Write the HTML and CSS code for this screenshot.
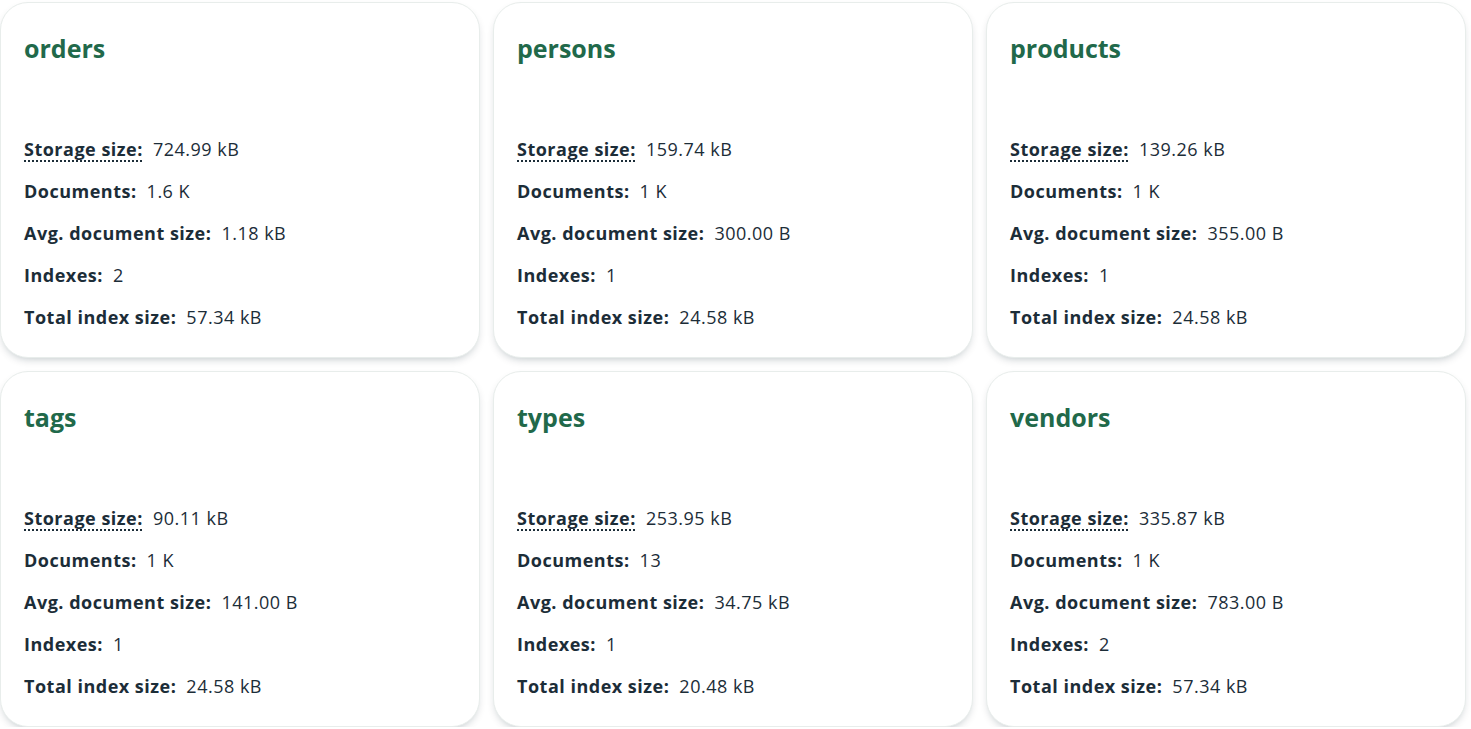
FILE: index.html
```html
<!DOCTYPE html>
<html lang="en">
<head>
<meta charset="utf-8">
<title>Collections</title>
<link rel="stylesheet" href="styles.css">
</head>
<body>
<div class="grid">
  <div class="card">
    <h2 class="title">orders</h2>
    <dl class="stats">
      <div class="row"><dt class="label dotted">Storage size:</dt><dd class="value">724.99 kB</dd></div>
      <div class="row"><dt class="label">Documents:</dt><dd class="value">1.6 K</dd></div>
      <div class="row"><dt class="label">Avg. document size:</dt><dd class="value">1.18 kB</dd></div>
      <div class="row"><dt class="label">Indexes:</dt><dd class="value">2</dd></div>
      <div class="row"><dt class="label">Total index size:</dt><dd class="value">57.34 kB</dd></div>
    </dl>
  </div>
  <div class="card">
    <h2 class="title">persons</h2>
    <dl class="stats">
      <div class="row"><dt class="label dotted">Storage size:</dt><dd class="value">159.74 kB</dd></div>
      <div class="row"><dt class="label">Documents:</dt><dd class="value">1 K</dd></div>
      <div class="row"><dt class="label">Avg. document size:</dt><dd class="value">300.00 B</dd></div>
      <div class="row"><dt class="label">Indexes:</dt><dd class="value">1</dd></div>
      <div class="row"><dt class="label">Total index size:</dt><dd class="value">24.58 kB</dd></div>
    </dl>
  </div>
  <div class="card">
    <h2 class="title">products</h2>
    <dl class="stats">
      <div class="row"><dt class="label dotted">Storage size:</dt><dd class="value">139.26 kB</dd></div>
      <div class="row"><dt class="label">Documents:</dt><dd class="value">1 K</dd></div>
      <div class="row"><dt class="label">Avg. document size:</dt><dd class="value">355.00 B</dd></div>
      <div class="row"><dt class="label">Indexes:</dt><dd class="value">1</dd></div>
      <div class="row"><dt class="label">Total index size:</dt><dd class="value">24.58 kB</dd></div>
    </dl>
  </div>
  <div class="card">
    <h2 class="title">tags</h2>
    <dl class="stats">
      <div class="row"><dt class="label dotted">Storage size:</dt><dd class="value">90.11 kB</dd></div>
      <div class="row"><dt class="label">Documents:</dt><dd class="value">1 K</dd></div>
      <div class="row"><dt class="label">Avg. document size:</dt><dd class="value">141.00 B</dd></div>
      <div class="row"><dt class="label">Indexes:</dt><dd class="value">1</dd></div>
      <div class="row"><dt class="label">Total index size:</dt><dd class="value">24.58 kB</dd></div>
    </dl>
  </div>
  <div class="card">
    <h2 class="title">types</h2>
    <dl class="stats">
      <div class="row"><dt class="label dotted">Storage size:</dt><dd class="value">253.95 kB</dd></div>
      <div class="row"><dt class="label">Documents:</dt><dd class="value">13</dd></div>
      <div class="row"><dt class="label">Avg. document size:</dt><dd class="value">34.75 kB</dd></div>
      <div class="row"><dt class="label">Indexes:</dt><dd class="value">1</dd></div>
      <div class="row"><dt class="label">Total index size:</dt><dd class="value">20.48 kB</dd></div>
    </dl>
  </div>
  <div class="card">
    <h2 class="title">vendors</h2>
    <dl class="stats">
      <div class="row"><dt class="label dotted">Storage size:</dt><dd class="value">335.87 kB</dd></div>
      <div class="row"><dt class="label">Documents:</dt><dd class="value">1 K</dd></div>
      <div class="row"><dt class="label">Avg. document size:</dt><dd class="value">783.00 B</dd></div>
      <div class="row"><dt class="label">Indexes:</dt><dd class="value">2</dd></div>
      <div class="row"><dt class="label">Total index size:</dt><dd class="value">57.34 kB</dd></div>
    </dl>
  </div>
</div>
</body>
</html>
```

FILE: styles.css
```css
html, body {
  margin: 0;
  padding: 0;
  background: #ffffff;
}

body {
  font-family: "Open Sans", "Noto Sans", sans-serif;
  color: #1c2d38;
  overflow: hidden;
}

.grid {
  display: grid;
  grid-template-columns: repeat(3, 480px);
  grid-auto-rows: 356px;
  gap: 13px;
  padding-top: 2px;
}

.card {
  box-sizing: border-box;
  background: #ffffff;
  border: 1px solid #e8edeb;
  border-radius: 28px;
  box-shadow: 0 4px 10px -4px rgba(0, 30, 43, 0.3);
  padding: 29px 23px 19px;
  display: flex;
  flex-direction: column;
}

.title {
  margin: 0;
  font-size: 25px;
  line-height: 32px;
  font-weight: 700;
  color: #21694a;
}

.stats {
  margin: 64px 0 0;
  padding: 0;
  display: flex;
  flex-direction: column;
}

.row {
  display: flex;
  align-items: baseline;
  height: 42px;
  line-height: 42px;
  font-size: 18px;
  letter-spacing: 0.5px;
}

.label {
  font-weight: 700;
  margin-right: 10px;
}

.dotted {
  text-decoration: underline dotted #1c2d38;
  text-decoration-thickness: 2px;
  text-underline-offset: 4px;
}

.value {
  margin: 0;
  font-weight: 400;
}
```
